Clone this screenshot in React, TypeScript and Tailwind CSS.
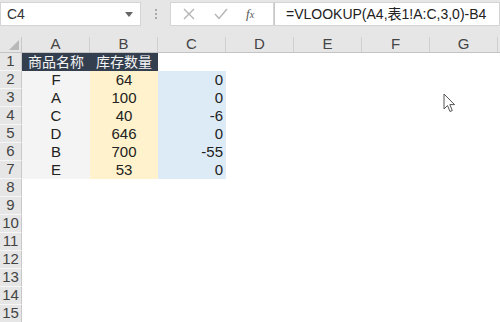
const font = { fontFamily: '"Liberation Sans", "Noto Sans CJK SC", sans-serif' };

const cols = ["A", "B", "C", "D", "E", "F", "G"];

const rows: Array<{ a: string; b: string; c: string }> = [
  { a: "F", b: "64", c: "0" },
  { a: "A", b: "100", c: "0" },
  { a: "C", b: "40", c: "-6" },
  { a: "D", b: "646", c: "0" },
  { a: "B", b: "700", c: "-55" },
  { a: "E", b: "53", c: "0" },
];

function RowHead({ n }: { n: number }) {
  return (
    <div className="h-[18px] w-[22px] shrink-0 bg-[#e6e6e6] border-b border-[#f6f6f6] border-r border-r-[#c8c8c8] flex items-center justify-center text-[15px] text-[#444]">
      {n}
    </div>
  );
}

function Cursor() {
  return (
    <svg
      className="absolute left-[443px] top-[93px]"
      width="14"
      height="22"
      viewBox="0 0 14 22"
    >
      <path
        d="M1 1 L1 16 L4.5 12.5 L7 18.5 L9.3 17.5 L6.8 11.6 L11.5 11.6 Z"
        fill="#fff"
        stroke="#555"
        strokeWidth="1"
        strokeLinejoin="round"
      />
    </svg>
  );
}

export default function App() {
  return (
    <div className="relative w-[500px] h-[322px] overflow-hidden bg-white" style={font}>
      {/* formula bar */}
      <div className="h-[37px] bg-[#e6e6e6] pt-[2px] flex items-start">
        <div className="w-[141px] h-[24px] bg-white border border-[#d4d4d4] flex items-center justify-between pl-[6px] pr-[7px]">
          <span className="text-[14px] text-[#333]">C4</span>
          <svg width="8" height="5" viewBox="0 0 8 5">
            <path d="M0 0 L8 0 L4 5 Z" fill="#666" />
          </svg>
        </div>
        <div className="w-[29px] h-[24px] flex flex-col items-center justify-center gap-[2px]">
          <span className="w-[2px] h-[2px] bg-[#a8a8a8]" />
          <span className="w-[2px] h-[2px] bg-[#a8a8a8]" />
          <span className="w-[2px] h-[2px] bg-[#a8a8a8]" />
        </div>
        <div className="w-[104px] h-[24px] bg-white border border-[#d4d4d4] flex items-center pl-[12px]">
          <svg width="12" height="12" viewBox="0 0 12 12">
            <path d="M1 1 L11 11 M11 1 L1 11" stroke="#b4b4b4" strokeWidth="1.4" />
          </svg>
          <svg className="ml-[19px]" width="14" height="12" viewBox="0 0 14 12">
            <path d="M1 6 L5 10.5 L13 1" stroke="#b4b4b4" strokeWidth="1.4" fill="none" />
          </svg>
          <span className="ml-[18px] text-[13px] italic text-[#555]" style={{ fontFamily: '"Liberation Serif", serif' }}>
            f<span className="text-[10px]">x</span>
          </span>
        </div>
        <div className="flex-1 h-[24px] bg-white border border-[#d4d4d4] border-l-[#c8c8c8] flex items-center pl-[11px] text-[14px] text-[#222]">
          =VLOOKUP(A4,表1!A:C,3,0)-B4
        </div>
      </div>

      {/* column headers */}
      <div className="flex h-[16px] bg-[#e6e6e6] border-b border-[#c4c4c4]">
        <div className="w-[22px] shrink-0 border-r border-[#c8c8c8] relative">
          <svg className="absolute right-[2px] bottom-[2px]" width="10" height="10" viewBox="0 0 10 10">
            <path d="M10 0 L10 10 L0 10 Z" fill="#b8b8b8" />
          </svg>
        </div>
        {cols.map((c) => (
          <div
            key={c}
            className="w-[68px] shrink-0 border-r border-[#cfcfcf] flex items-center justify-center text-[15px] text-[#444]"
          >
            {c}
          </div>
        ))}
      </div>

      {/* grid */}
      <div className="flex flex-col">
        <div className="flex">
          <RowHead n={1} />
          <div className="w-[68px] h-[18px] bg-[#333f4f] text-[#f4f4f4] text-[14px] flex items-center justify-center">
            商品名称
          </div>
          <div className="w-[68px] h-[18px] bg-[#333f4f] text-[#f4f4f4] text-[14px] flex items-center justify-center">
            库存数量
          </div>
        </div>
        {rows.map((r, i) => (
          <div key={i} className="flex">
            <RowHead n={i + 2} />
            <div className="w-[68px] h-[18px] bg-[#f4f4f4] text-[15px] text-[#222] flex items-center justify-center">
              {r.a}
            </div>
            <div className="w-[68px] h-[18px] bg-[#fff2cc] text-[15px] text-[#222] flex items-center justify-center">
              {r.b}
            </div>
            <div className="w-[68px] h-[18px] bg-[#ddebf7] text-[15px] text-[#222] flex items-center justify-end pr-[3px]">
              {r.c}
            </div>
          </div>
        ))}
        {[8, 9, 10, 11, 12, 13, 14, 15].map((n) => (
          <div key={n} className="flex">
            <RowHead n={n} />
          </div>
        ))}
      </div>

      <Cursor />
    </div>
  );
}
